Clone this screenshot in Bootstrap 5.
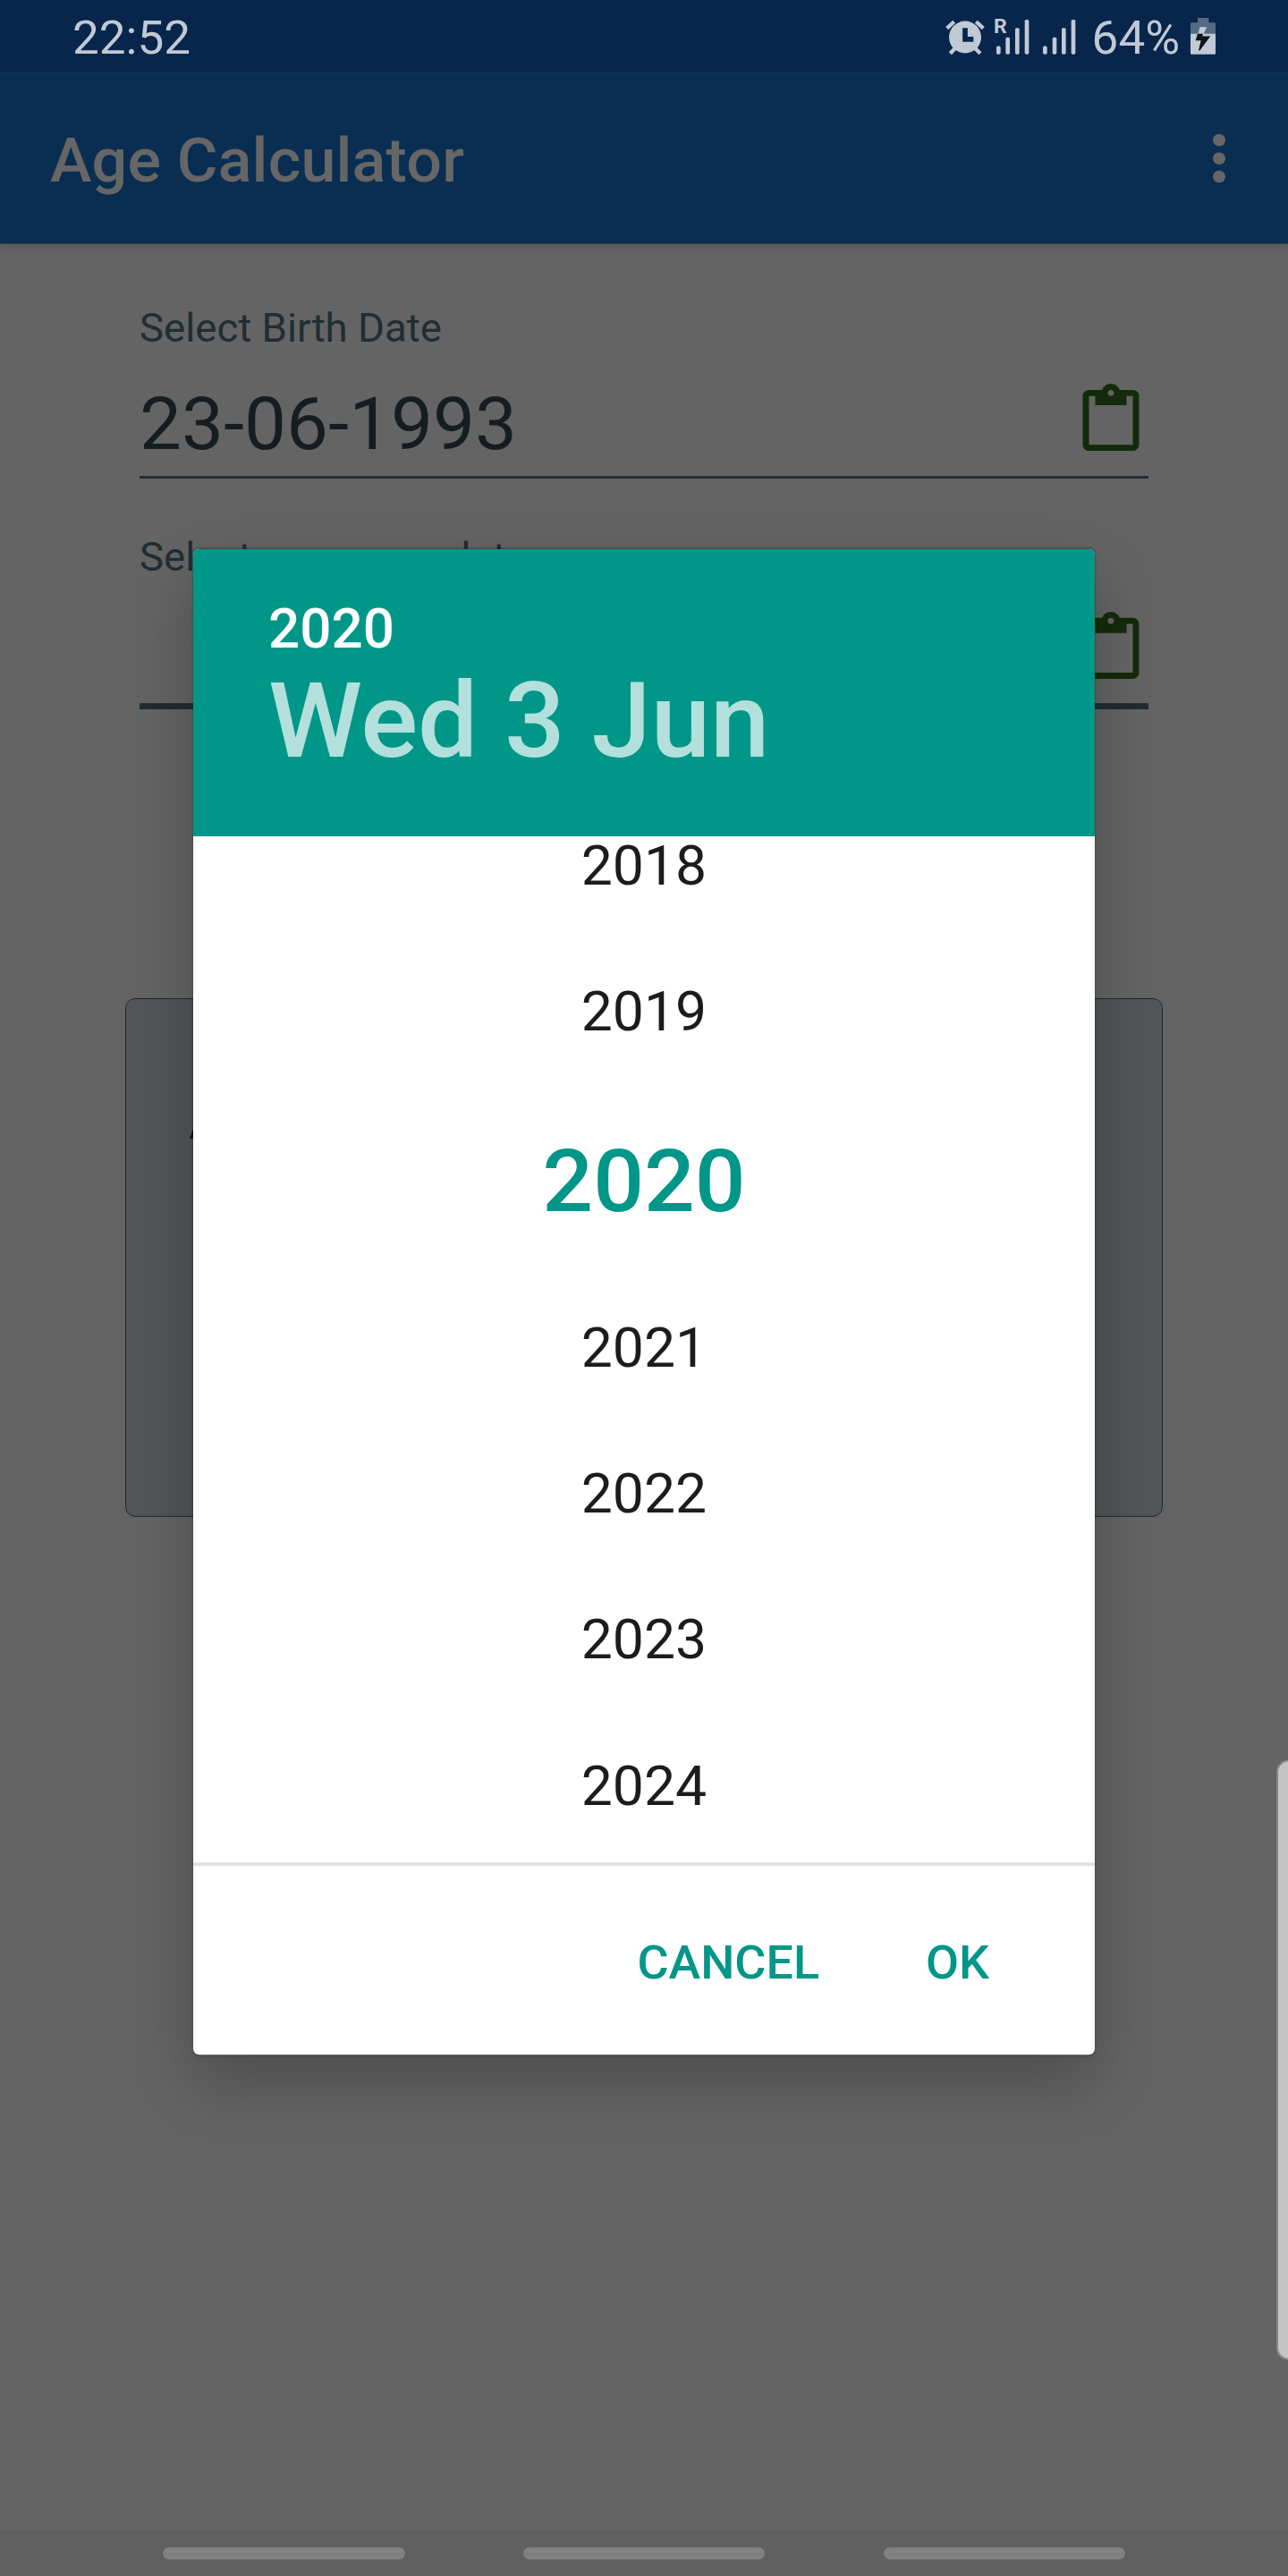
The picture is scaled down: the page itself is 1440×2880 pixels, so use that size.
<!DOCTYPE html>
<html lang="en">
<head>
<meta charset="utf-8">
<meta name="viewport" content="width=device-width, initial-scale=1">
<title>Age Calculator</title>
<link href="https://cdn.jsdelivr.net/npm/bootstrap@5.3.0/dist/css/bootstrap.min.css" rel="stylesheet">
<style>
  html, body { margin: 0; height: 2880px; overflow: hidden; background: #646464; }
  body { font-family: Roboto, "Noto Sans", sans-serif; }
  /* The layout is 1440x2960 (3.5px per dp), fitted to the 2880px window */
  .phone { width: 1440px; height: 2960px; transform: scaleY(.972973); transform-origin: 0 0; background: #646464; }
  .statusbar { height: 84px; background: #08264b; color: #c1c9d4; font-size: 53px; line-height: 84px; padding: 0 80px 0 81px; }
  .statusbar svg { display: block; margin-top: 2px; }
  .status-text { padding-top: 2px; }
  .status-battery { padding: 2px 11px 0 13px; }
  .appbar { height: 196px; background: #092e52; color: #666; padding: 0 70px 0 56px; box-shadow: 0 5px 5px rgba(0,0,0,.12); }
  .apptitle { font-size: 70px; font-weight: 500; line-height: 1; padding-top: 6px; letter-spacing: .2px; }
  .form-area { padding: 70px 156px 0; }
  .field { margin-bottom: 62.5px; color: #161d21; }
  .field-label { display: block; font-size: 45.6px; line-height: 54px; height: 91px; padding-top: 1.2px; color: #212d32; }
  .field-label.compare { padding-top: 2px; }
  .field-label .last-word { padding-left: 17px; }
  .field-row { height: 108.5px; border-bottom: 3.5px solid #212d32; }
  .field-row.focused { height: 112px; border-bottom: 7px solid #212b32; }
  .field-value { font-size: 83.6px; line-height: 84px; padding-top: 4px; }
  .clip { width: 84px; height: 84px; fill: #142b0b; }
  .result { margin: 332px 140px 0; height: 596px; border: 1.2px solid #1c2b2b; border-radius: 11px; background: #525658; padding: 110px 70px; color: #1e1212; font-size: 56px; line-height: 62px; }
  .navbar-keys { height: 53px; background: #606060; padding: 20px 182px 0; }
  .key { width: 270.5px; height: 13.5px; border-radius: 8px; background: #818181; }
  .edge { left: 1427px; top: 2022px; width: 20px; height: 690px; background: #c4c4c4; border: 2px solid #858585; border-radius: 14px 0 0 14px; }
  .picker { left: 216px; top: 630.5px; width: 1008px; height: 1730px; border-radius: 7px; overflow: hidden; background: #fff; box-shadow: 0 32px 72px rgba(0,0,0,.24), 0 0 3px rgba(0,0,0,.35); }
  .picker-head { height: 330px; background: #009788; padding: 52px 84px 0; font-weight: 500; }
  .head-year { color: #fff; font-size: 62px; line-height: 80px; }
  .head-date { color: #b3e0dc; font-size: 119.3px; line-height: 130px; }
  .years { height: 1179px; color: #1c1c1c; font-size: 62.5px; }
  .years li { height: 168px; line-height: 168px; text-align: center; }
  .years li:first-child { height: 118px; line-height: 68px; }
  .years li.chosen { height: 218.3px; line-height: 222px; font-size: 100px; font-weight: 500; color: #009688; }
  .actions { height: 221px; border-top: 4px solid #e0e0e0; padding: 6px 118px 0 0; gap: 119px; }
  .action { border: 0; background: none; padding: 0; color: #009688; font-size: 53.8px; font-weight: 500; line-height: 60px; }
</style>
</head>
<body>
<div class="phone position-relative d-flex flex-column overflow-hidden">
  <div class="statusbar d-flex justify-content-between flex-shrink-0">
    <span class="status-text">22:52</span>
    <div class="d-flex">
      <svg width="153" height="82" viewBox="45 0 459 240" preserveAspectRatio="none" fill="#c1c9d4" aria-hidden="true">
        <circle cx="117" cy="119" r="54"/>
        <path d="M56 89L80 67M178 89L154 67" stroke="#c1c9d4" stroke-width="13"/>
        <path d="M67 174L82 158M168 174L152 158" stroke="#c1c9d4" stroke-width="13"/>
        <path d="M117 84V122H145" transform="translate(0 4)" fill="none" stroke="#08264b" stroke-width="17"/>
        <text x="213" y="104" font-family="Roboto" font-weight="700" font-size="69">R</text>
        <g><rect x="222" y="149" width="14" height="28" rx="5"/><rect x="253" y="120" width="14" height="57" rx="5"/><rect x="285" y="88" width="14" height="89" rx="5"/><rect x="317" y="60" width="14" height="117" rx="5"/></g>
        <g><rect x="378" y="149" width="14" height="28" rx="5"/><rect x="410" y="120" width="14" height="57" rx="5"/><rect x="441" y="88" width="14" height="89" rx="5"/><rect x="473" y="60" width="14" height="117" rx="5"/></g>
      </svg>
      <span class="status-battery">64%</span>
      <svg width="30" height="82" viewBox="870 0 90 240" preserveAspectRatio="none" aria-hidden="true">
        <path d="M897 54h37v16h20q3 0 3 3v36h-84V73q0-3 3-3h21z" fill="#576a85"/>
        <path d="M873 108h84v66q0 3-3 3h-78q-3 0-3-3z" fill="#c1c9d4"/>
        <path d="M905 85h22l-10 24h-19z" fill="#c1c9d4"/>
        <path d="M897 108h18l-2 8h27l-36 48h-4l8-34h-18z" fill="#10151b"/>
      </svg>
    </div>
  </div>
  <header class="appbar d-flex justify-content-between align-items-center flex-shrink-0 position-relative">
    <h1 class="apptitle m-0">Age Calculator</h1>
    <svg width="14" height="56" viewBox="0 0 14 56" fill="#666" aria-label="More options"><circle cx="7" cy="7" r="7"/><circle cx="7" cy="28" r="7"/><circle cx="7" cy="49" r="7"/></svg>
  </header>
  <main class="flex-grow-1">
    <div class="form-area">
      <div class="field">
        <label class="field-label">Select Birth Date</label>
        <div class="field-row d-flex justify-content-between align-items-start">
          <span class="field-value">23-06-1993</span>
          <svg class="clip" viewBox="0 0 24 24"><path d="M19 2h-4.18C14.4.84 13.3 0 12 0c-1.3 0-2.4.84-2.82 2H5c-1.1 0-2 .9-2 2v16c0 1.1.9 2 2 2h14c1.1 0 2-.9 2-2V4c0-1.1-.9-2-2-2zm-7 0c.55 0 1 .45 1 1s-.45 1-1 1-1-.45-1-1 .45-1 1-1zm7 18H5V4h2v3h10V4h2v16z"/></svg>
        </div>
      </div>
      <div class="field">
        <label class="field-label compare">Select compare <span class="last-word">date</span></label>
        <div class="field-row focused d-flex justify-content-end align-items-start">
          <svg class="clip" viewBox="0 0 24 24"><path d="M19 2h-4.18C14.4.84 13.3 0 12 0c-1.3 0-2.4.84-2.82 2H5c-1.1 0-2 .9-2 2v16c0 1.1.9 2 2 2h14c1.1 0 2-.9 2-2V4c0-1.1-.9-2-2-2zm-7 0c.55 0 1 .45 1 1s-.45 1-1 1-1-.45-1-1 .45-1 1-1zm7 18H5V4h2v3h10V4h2v16z"/></svg>
        </div>
      </div>
    </div>
    <section class="result">Age</section>
  </main>
  <nav class="navbar-keys d-flex justify-content-between flex-shrink-0">
    <span class="key"></span><span class="key"></span><span class="key"></span>
  </nav>
  <div class="edge position-absolute"></div>

  <div class="picker position-absolute d-flex flex-column" role="dialog">
    <div class="picker-head flex-shrink-0">
      <div class="head-year">2020</div>
      <div class="head-date">Wed 3 Jun</div>
    </div>
    <ul class="years list-unstyled m-0 flex-shrink-0">
      <li>2018</li><li>2019</li><li class="chosen">2020</li><li>2021</li><li>2022</li><li>2023</li><li>2024</li>
    </ul>
    <div class="actions d-flex justify-content-end align-items-center flex-shrink-0">
      <button class="action" type="button">CANCEL</button>
      <button class="action" type="button">OK</button>
    </div>
  </div>
</div>
<script src="https://cdn.jsdelivr.net/npm/bootstrap@5.3.0/dist/js/bootstrap.bundle.min.js"></script>
</body>
</html>
